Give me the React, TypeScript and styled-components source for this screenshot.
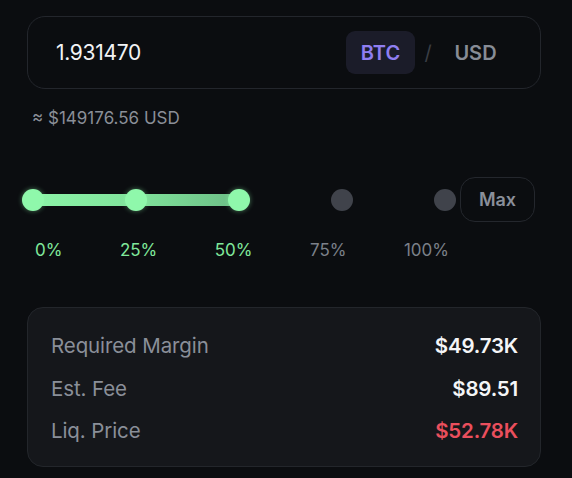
import React from "react";
import styled, { createGlobalStyle } from "styled-components";

const Global = createGlobalStyle`
  html, body { margin: 0; padding: 0; background: #0b0d10; }
  body { font-family: Inter, "Noto Sans", sans-serif; -webkit-font-smoothing: antialiased; }
`;

const Page = styled.div`
  width: 572px;
  height: 478px;
  box-sizing: border-box;
  padding: 16px 31px 0 27px;
  display: flex;
  flex-direction: column;
  background: #0b0d10;
`;

const InputBox = styled.div`
  height: 73px;
  box-sizing: border-box;
  border: 1px solid #23262c;
  border-radius: 18px;
  display: flex;
  align-items: center;
  justify-content: space-between;
  padding: 0 30px 0 28px;
`;

const Amount = styled.span`
  color: #f2f3f5;
  font-size: 21px;
  font-weight: 400;
  letter-spacing: -0.3px;
`;

const Toggle = styled.div`
  display: flex;
  align-items: center;
  gap: 8px;
`;

const UnitPill = styled.button<{ $active?: boolean }>`
  width: 69px;
  height: 43px;
  border: none;
  border-radius: 9px;
  background: ${(p) => (p.$active ? "#1b1c29" : "transparent")};
  color: ${(p) => (p.$active ? "#8f7ef0" : "#878c96")};
  font-family: inherit;
  font-size: 20px;
  font-weight: 600;
  padding: 0;
`;

const Slash = styled.span`
  color: #3a3e45;
  font-size: 20px;
  width: 10px;
  text-align: center;
`;

const Approx = styled.div`
  margin-top: 19px;
  margin-left: 5px;
  color: #8a8f98;
  font-size: 17px;
  line-height: 21px;
`;

const SliderRow = styled.div`
  margin-top: 48px;
  margin-left: -5px;
  display: flex;
  align-items: center;
  gap: 4px;
`;

const Track = styled.div`
  position: relative;
  width: 434px;
  height: 22px;
  display: flex;
  align-items: center;
  justify-content: space-between;
`;

const Fill = styled.div`
  position: absolute;
  left: 11px;
  top: 5px;
  height: 12px;
  background: linear-gradient(90deg, #8cf4a8 0%, #80e29b 50%, #6cbd86 100%);
`;

const Dot = styled.div<{ $active?: boolean }>`
  position: relative;
  width: 22px;
  height: 22px;
  border-radius: 50%;
  background: ${(p) => (p.$active ? "#8ff8ab" : "#40434b")};
  box-shadow: ${(p) => (p.$active ? "0 0 5px rgba(143, 248, 171, 0.45)" : "none")};
`;

const MaxButton = styled.button`
  width: 75px;
  height: 45px;
  box-sizing: border-box;
  border: 1px solid #24272d;
  border-radius: 15px;
  background: transparent;
  color: #8a8f9a;
  font-family: inherit;
  font-size: 18px;
  font-weight: 600;
  padding: 0;
`;

const Labels = styled.div`
  margin-top: 18px;
  margin-left: 8px;
  width: 414px;
  display: flex;
  justify-content: space-between;
`;

const Label = styled.span<{ $active?: boolean }>`
  font-size: 17px;
  line-height: 20px;
  color: ${(p) => (p.$active ? "#80e89b" : "#7b8089")};
`;

const Card = styled.div`
  margin-top: 47px;
  height: 160px;
  box-sizing: border-box;
  border: 1px solid #23262b;
  border-radius: 16px;
  background: #15171b;
  padding: 16px 22px 14px 23px;
  display: flex;
  flex-direction: column;
`;

const Row = styled.div`
  height: 43px;
  display: flex;
  align-items: center;
  justify-content: space-between;
`;

const RowLabel = styled.span`
  color: #8a8f99;
  font-size: 20.5px;
  letter-spacing: -0.1px;
`;

const RowValue = styled.span<{ $danger?: boolean }>`
  color: ${(p) => (p.$danger ? "#ea4f5d" : "#f4f5f7")};
  font-size: 20.5px;
  font-weight: 600;
  letter-spacing: -0.2px;
`;

const levels = ["0%", "25%", "50%", "75%", "100%"];
const activeIndex = 2;

export default function App() {
  return (
    <>
      <Global />
      <Page>
        <InputBox>
          <Amount>1.931470</Amount>
          <Toggle>
            <UnitPill $active>BTC</UnitPill>
            <Slash>/</Slash>
            <UnitPill>USD</UnitPill>
          </Toggle>
        </InputBox>
        <Approx>≈ $149176.56 USD</Approx>
        <SliderRow>
          <Track>
            <Fill style={{ width: `${(activeIndex / (levels.length - 1)) * 412}px` }} />
            {levels.map((l, i) => (
              <Dot key={l} $active={i <= activeIndex} />
            ))}
          </Track>
          <MaxButton>Max</MaxButton>
        </SliderRow>
        <Labels>
          {levels.map((l, i) => (
            <Label key={l} $active={i <= activeIndex}>
              {l}
            </Label>
          ))}
        </Labels>
        <Card>
          <Row>
            <RowLabel>Required Margin</RowLabel>
            <RowValue>$49.73K</RowValue>
          </Row>
          <Row>
            <RowLabel>Est. Fee</RowLabel>
            <RowValue>$89.51</RowValue>
          </Row>
          <Row>
            <RowLabel>Liq. Price</RowLabel>
            <RowValue $danger>$52.78K</RowValue>
          </Row>
        </Card>
      </Page>
    </>
  );
}
